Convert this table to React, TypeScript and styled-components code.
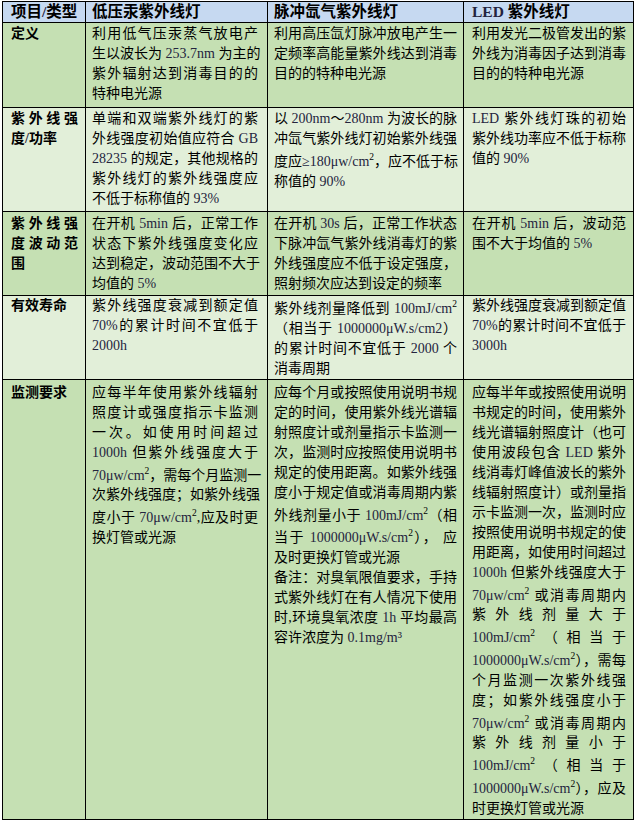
import React from 'react';
import styled, { createGlobalStyle } from 'styled-components';

const GlobalStyle = createGlobalStyle`
  html, body { margin: 0; padding: 0; background: #ffffff; }
  body { font-family: "Liberation Serif", "Noto Sans CJK SC", serif; }
`;

const Page = styled.div`
  padding: 1px 0 0 2px;
`;

const Table = styled.table`
  border-collapse: collapse;
  table-layout: fixed;
  width: 631px;
  font-family: "Liberation Serif", "Noto Sans CJK SC", sans-serif;
  font-size: 14px;
  line-height: 20px;
  color: #000;
`;

const Col = styled.col<{ $w: number }>`
  width: ${(p) => p.$w}px;
`;

const Row = styled.tr<{ $bg: string; $h: number }>`
  background: ${(p) => p.$bg};
  height: ${(p) => p.$h}px;
`;

const Cell = styled.td<{ $pl: number; $pr: number; $pt: number; $bold: boolean; $head: boolean }>`
  border: 1px solid #000;
  vertical-align: top;
  padding: ${(p) => p.$pt}px ${(p) => p.$pr}px 0 ${(p) => p.$pl}px;
  font-weight: ${(p) => (p.$bold ? 700 : 400)};
  font-size: ${(p) => (p.$head ? '15.5px' : '14px')};
`;

const Para = styled.div``;

const Line = styled.span<{ $last: boolean }>`
  display: block;
  white-space: nowrap;
  text-align: justify;
  text-align-last: ${(p) => (p.$last ? 'left' : 'justify')};
`;

const Latin = styled.span`
  color: #24243e;
`;

const Sup = styled.sup`
  font-size: 9.5px;
  line-height: 16px;
  vertical-align: super;
`;

type CellData = string[][];
type RowData = { bg: string; h: number; pt: number; head?: boolean; cells: CellData[] };

const columns = [
  { w: 83, pl: 8, pr: 7 },
  { w: 182, pl: 6, pr: 9 },
  { w: 196, pl: 6, pr: 6 },
  { w: 170, pl: 8, pr: 7 },
];

const BLUE = '#c6d9f1';
const DARK = '#c5e0b3';
const LIGHT = '#e2efd9';

const rows: RowData[] = [
  {
    bg: BLUE,
    h: 21,
    pt: 0,
    head: true,
    cells: [[['项目/类型']], [['低压汞紫外线灯']], [['脉冲氙气紫外线灯']], [['LED 紫外线灯']]],
  },
  {
    bg: DARK,
    h: 85,
    pt: 1,
    cells: [
      [['定义']],
      [['利用低气压汞蒸气放电产', '生以波长为 253.7nm 为主的', '紫外辐射达到消毒目的的', '特种电光源']],
      [['利用高压氙灯脉冲放电产生一', '定频率高能量紫外线达到消毒', '目的的特种电光源']],
      [['利用发光二极管发出的紫', '外线为消毒因子达到消毒', '目的的特种电光源']],
    ],
  },
  {
    bg: LIGHT,
    h: 104,
    pt: 1,
    cells: [
      [['紫外线强', '度/功率']],
      [[
        '单端和双端紫外线灯的紫',
        '外线强度初始值应符合 GB',
        '28235 的规定，其他规格的',
        '紫外线灯的紫外线强度应',
        '不低于标称值的 93%',
      ]],
      [[
        '以 200nm～280nm 为波长的脉',
        '冲氙气紫外线灯初始紫外线强',
        '度应≥180μw/cm^2，应不低于标',
        '称值的 90%',
      ]],
      [['LED 紫外线灯珠的初始', '紫外线功率应不低于标称', '值的 90%']],
    ],
  },
  {
    bg: DARK,
    h: 84,
    pt: 2,
    cells: [
      [['紫外线强', '度波动范', '围']],
      [['在开机 5min 后，正常工作', '状态下紫外线强度变化应', '达到稳定，波动范围不大于', '均值的 5%']],
      [[
        '在开机 30s 后，正常工作状态',
        '下脉冲氙气紫外线消毒灯的紫',
        '外线强度应不低于设定强度，',
        '照射频次应达到设定的频率',
      ]],
      [['在开机 5min 后，波动范', '围不大于均值的 5%']],
    ],
  },
  {
    bg: LIGHT,
    h: 82,
    pt: 0,
    cells: [
      [['有效寿命']],
      [['紫外线强度衰减到额定值', '70%的累计时间不宜低于', '2000h']],
      [[
        '紫外线剂量降低到 100mJ/cm^2',
        '（相当于 1000000μW.s/cm2）',
        '的累计时间不宜低于 2000 个',
        '消毒周期',
      ]],
      [['紫外线强度衰减到额定值', '70%的累计时间不宜低于', '3000h']],
    ],
  },
  {
    bg: DARK,
    h: 438,
    pt: 3,
    cells: [
      [['监测要求']],
      [[
        '应每半年使用紫外线辐射',
        '照度计或强度指示卡监测',
        '一次。如使用时间超过',
        '1000h 但紫外线强度大于',
        '70μw/cm^2，需每个月监测一',
        '次紫外线强度；如紫外线强',
        '度小于 70μw/cm^2,应及时更',
        '换灯管或光源',
      ]],
      [
        [
          '应每个月或按照使用说明书规',
          '定的时间，使用紫外线光谱辐',
          '射照度计或剂量指示卡监测一',
          '次，监测时应按照使用说明书',
          '规定的使用距离。如紫外线强',
          '度小于规定值或消毒周期内紫',
          '外线剂量小于 100mJ/cm^2（相',
          '当于 1000000μW.s/cm^2）， 应',
          '及时更换灯管或光源',
        ],
        [
          '备注：对臭氧限值要求，手持',
          '式紫外线灯在有人情况下使用',
          '时,环境臭氧浓度 1h 平均最高',
          '容许浓度为 0.1mg/m³',
        ],
      ],
      [[
        '应每半年或按照使用说明',
        '书规定的时间，使用紫外',
        '线光谱辐射照度计（也可',
        '使用波段包含 LED 紫外',
        '线消毒灯峰值波长的紫外',
        '线辐射照度计）或剂量指',
        '示卡监测一次，监测时应',
        '按照使用说明书规定的使',
        '用距离，如使用时间超过',
        '1000h 但紫外线强度大于',
        '70μw/cm^2 或消毒周期内',
        '紫外线剂量大于',
        '100mJ/cm^2（相当于',
        '1000000μW.s/cm^2），需每',
        '个月监测一次紫外线强',
        '度；如紫外线强度小于',
        '70μw/cm^2 或消毒周期内',
        '紫外线剂量小于',
        '100mJ/cm^2（相当于',
        '1000000μW.s/cm^2），应及',
        '时更换灯管或光源',
      ]],
    ],
  },
];

const LATIN = /^[A-Za-z0-9.%μ≥³/]+$/;

function renderText(s: string): React.ReactNode[] {
  const parts = s.split(/(\^2|[A-Za-z0-9.%μ≥³/]+)/);
  return parts
    .filter((x) => x !== '')
    .map((x, i) => {
      if (x === '^2') return <Sup key={i}>2</Sup>;
      if (LATIN.test(x)) return <Latin key={i}>{x}</Latin>;
      return <React.Fragment key={i}>{x}</React.Fragment>;
    });
}

export default function App() {
  return (
    <Page>
      <GlobalStyle />
      <Table>
        <colgroup>
          {columns.map((c, i) => (
            <Col key={i} $w={c.w} />
          ))}
        </colgroup>
        <tbody>
          {rows.map((r, ri) => (
            <Row key={ri} $bg={r.bg} $h={r.h}>
              {r.cells.map((cell, ci) => (
                <Cell
                  key={ci}
                  $pl={columns[ci].pl}
                  $pr={columns[ci].pr}
                  $pt={r.pt}
                  $bold={!!r.head || ci === 0}
                  $head={!!r.head}
                >
                  {cell.map((para, pi) => (
                    <Para key={pi}>
                      {para.map((line, li) => (
                        <Line key={li} $last={li === para.length - 1}>
                          {renderText(line)}
                        </Line>
                      ))}
                    </Para>
                  ))}
                </Cell>
              ))}
            </Row>
          ))}
        </tbody>
      </Table>
    </Page>
  );
}
